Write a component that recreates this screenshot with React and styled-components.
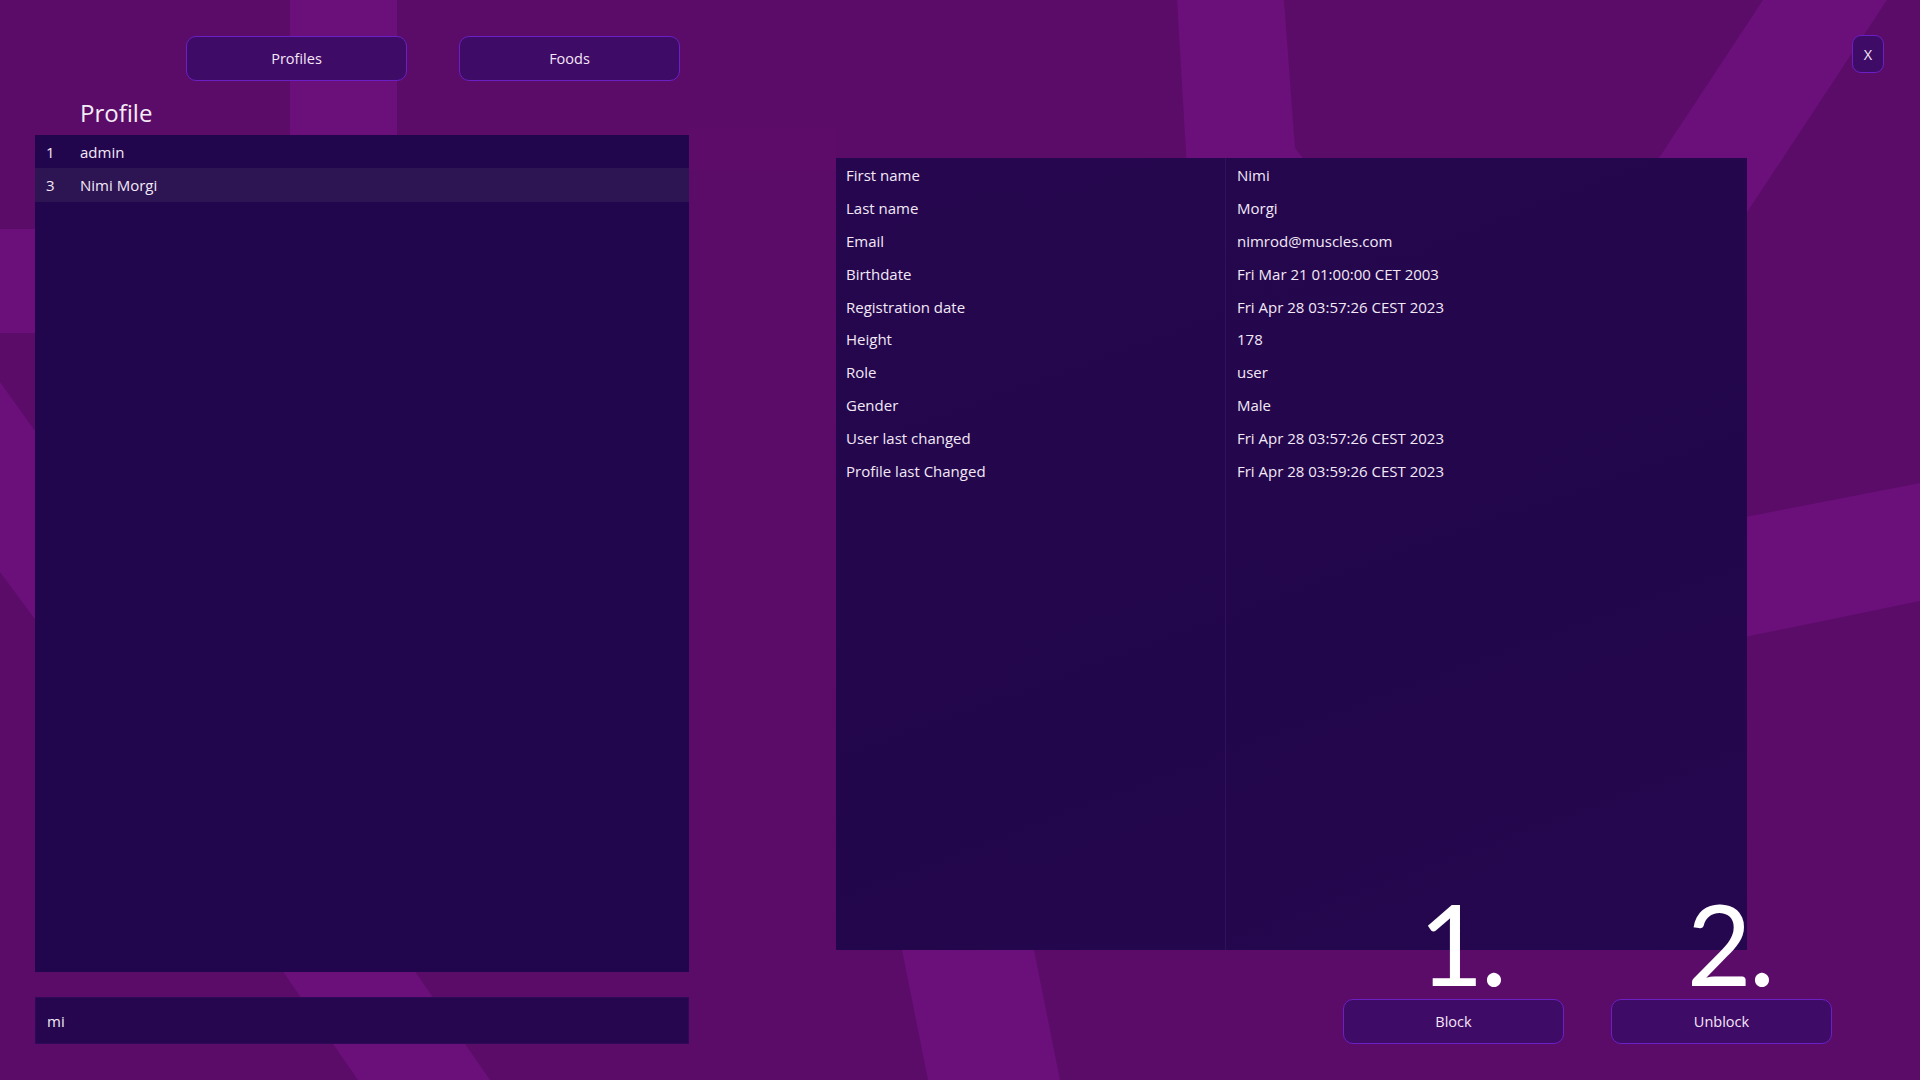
import React from "react";
import styled, { createGlobalStyle } from "styled-components";

const GlobalStyle = createGlobalStyle`
  html, body { margin: 0; padding: 0; background: #5b0c68; overflow: hidden; }
  * { box-sizing: border-box; }
`;

const Page = styled.div`
  position: relative;
  width: 1920px;
  height: 1080px;
  overflow: hidden;
  background: #5b0c68;
  font-family: "Open Sans", "Noto Sans", sans-serif;
  color: #f3e9f6;
`;

const Backdrop = styled.svg`
  position: absolute;
  inset: 0;
  width: 1920px;
  height: 1080px;
  z-index: 0;
`;

const Content = styled.div`
  position: relative;
  z-index: 1;
  display: flex;
  height: 100%;
  padding-left: 35px;
`;

const LeftColumn = styled.div`
  width: 654px;
  display: flex;
  flex-direction: column;
  padding-top: 36px;
`;

const Nav = styled.nav`
  display: flex;
  gap: 52px;
  padding-left: 151px;
`;

const PillButton = styled.button`
  width: ${(p) => p.$w || 221}px;
  height: ${(p) => p.$h || 45}px;
  background: #3e0b67;
  border: 1px solid #6a20c4;
  border-radius: ${(p) => p.$r || 10}px;
  color: #f6e6f7;
  font-family: "Open Sans", "Noto Sans", sans-serif;
  font-size: 14.5px;
  padding: 0;
  cursor: pointer;
`;

const Heading = styled.h2`
  margin: 15px 0 0 45px;
  font-size: 24px;
  line-height: 34px;
  font-weight: 400;
  color: #f5ecf7;
`;

const List = styled.ul`
  list-style: none;
  margin: 5px 0 0;
  padding: 0;
  height: 837px;
  background: #22064d;
`;

const ListRow = styled.li`
  display: flex;
  align-items: center;
  height: 33.4px;
  padding-left: 11px;
  font-size: 15px;
  background: ${(p) => (p.$active ? "#2d1452" : "transparent")};
`;

const RowId = styled.span`
  width: 34px;
`;

const Search = styled.input`
  margin-top: 25px;
  height: 47px;
  width: 100%;
  background: #26074f;
  border: 1px solid #2f0a58;
  color: #f3e9f6;
  font-family: "Open Sans", "Noto Sans", sans-serif;
  font-size: 15px;
  padding: 0 11px;
  outline: none;
`;

const RightColumn = styled.div`
  flex: 1;
  margin-left: 147px;
  display: flex;
  flex-direction: column;
`;

const TopBar = styled.div`
  display: flex;
  justify-content: flex-end;
  padding: 35px 36px 0 0;
`;

const DetailTable = styled.div`
  margin-top: 85px;
  width: 911px;
  height: 792px;
  padding-top: 1px;
  background:
    linear-gradient(to right, transparent 389px, #31105f 389px, #31105f 390px, transparent 390px),
    linear-gradient(160deg, #26074f 0%, #22064b 60%, #25074f 100%);
`;

const DetailRow = styled.div`
  display: grid;
  grid-template-columns: 390px 1fr;
  align-items: center;
  height: 32.8px;
  font-size: 15px;
`;

const Cell = styled.span`
  padding-left: ${(p) => (p.$value ? 11 : 10)}px;
  white-space: nowrap;
`;

const ActionRow = styled.div`
  position: relative;
  z-index: 2;
  display: flex;
  gap: 47px;
  margin-top: -52px;
  padding-left: 507px;
`;

const ActionGroup = styled.div`
  display: flex;
  flex-direction: column;
  align-items: center;
  width: 221px;
`;

const StepNumber = styled.div`
  font-family: Lato, "DejaVu Sans", sans-serif;
  font-size: 112px;
  font-weight: 400;
  line-height: 90px;
  height: 90px;
  letter-spacing: -3px;
  color: #ffffff;
  margin-bottom: 11px;
  padding-left: 16px;
`;

const rows = [
  ["First name", "Nimi"],
  ["Last name", "Morgi"],
  ["Email", "nimrod@muscles.com"],
  ["Birthdate", "Fri Mar 21 01:00:00 CET 2003"],
  ["Registration date", "Fri Apr 28 03:57:26 CEST 2023"],
  ["Height", "178"],
  ["Role", "user"],
  ["Gender", "Male"],
  ["User last changed", "Fri Apr 28 03:57:26 CEST 2023"],
  ["Profile last Changed", "Fri Apr 28 03:59:26 CEST 2023"],
];

const stripe = "#6b0f7a";

export default function App() {
  return (
    <Page>
      <GlobalStyle />
      <Backdrop viewBox="0 0 1920 1080" aria-hidden="true">
        <polygon fill={stripe} points="290,0 397,0 397,200 290,200" />
        <polygon fill={stripe} points="0,229 40,229 40,333 0,333" />
        <polygon fill={stripe} points="0,382 40,438 40,626 0,572" />
        <polygon fill={stripe} points="275,960 407,960 490,1080 358,1080" />
        <polygon fill={stripe} points="900,940 1032,940 1060,1080 928,1080" />
        <polygon fill={stripe} points="1177,0 1284,0 1295,148 1312,170 1187,170" />
        <polygon fill={stripe} points="1763,0 1887,0 1742,220 1618,220" />
        <polygon fill={stripe} points="1740,518 1920,483 1920,601 1740,638" />
        <polygon fill="#5d0c6a" points="688,128 836,128 836,170 688,170" />
      </Backdrop>
      <Content>
        <LeftColumn>
          <Nav>
            <PillButton>Profiles</PillButton>
            <PillButton>Foods</PillButton>
          </Nav>
          <Heading>Profile</Heading>
          <List>
            <ListRow>
              <RowId>1</RowId>admin
            </ListRow>
            <ListRow $active>
              <RowId>3</RowId>Nimi Morgi
            </ListRow>
          </List>
          <Search defaultValue="mi" />
        </LeftColumn>
        <RightColumn>
          <TopBar>
            <PillButton $w={32} $h={38} $r={9}>X</PillButton>
          </TopBar>
          <DetailTable>
            {rows.map(([k, v]) => (
              <DetailRow key={k}>
                <Cell>{k}</Cell>
                <Cell $value>{v}</Cell>
              </DetailRow>
            ))}
          </DetailTable>
          <ActionRow>
            <ActionGroup>
              <StepNumber>1.</StepNumber>
              <PillButton>Block</PillButton>
            </ActionGroup>
            <ActionGroup>
              <StepNumber>2.</StepNumber>
              <PillButton>Unblock</PillButton>
            </ActionGroup>
          </ActionRow>
        </RightColumn>
      </Content>
    </Page>
  );
}
